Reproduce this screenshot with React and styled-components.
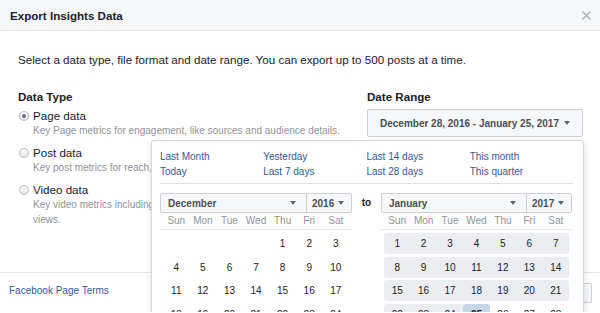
import React from "react";
import styled, { createGlobalStyle } from "styled-components";

const GlobalStyle = createGlobalStyle`
  html, body { margin: 0; padding: 0; overflow: hidden; background: #fff; }
  body { font-family: "Liberation Sans", Arial, Helvetica, sans-serif; color: #1d2129; }
  * { box-sizing: border-box; }
`;

const Dialog = styled.div`
  width: 600px;
  background: #fff;
`;

const Header = styled.div`
  height: 31px;
  background: #f6f7f9;
  border-bottom: 1px solid #e5e5e5;
  display: flex;
  align-items: center;
  justify-content: space-between;
  padding: 0 9px 0 10px;
`;

const Title = styled.div`
  font-size: 11.6px;
  font-weight: bold;
  color: #1d2129;
`;

const CloseButton = styled.button`
  border: 0;
  background: none;
  padding: 0;
  display: flex;
  cursor: pointer;
`;

const Body = styled.div`
  height: 241px;
  padding: 21px 17px 0 18px;
`;

const Intro = styled.p`
  margin: 0;
  font-size: 11.6px;
  line-height: 15px;
  color: #1d2129;
`;

const Columns = styled.div`
  display: grid;
  grid-template-columns: 1fr 216px;
  column-gap: 22px;
  margin-top: 22px;
`;

const SectionTitle = styled.div`
  font-size: 11.6px;
  font-weight: bold;
  line-height: 15px;
  color: #1d2129;
`;

const OptionList = styled.div`
  display: flex;
  flex-direction: column;
  gap: 7px;
  margin-top: 4px;
`;

const Option = styled.label`
  display: grid;
  grid-template-columns: 15px 1fr;
  align-items: center;
`;

const Radio = styled.span`
  width: 10px;
  height: 10px;
  margin-left: 1px;
  border-radius: 50%;
  border: 1px solid #b6bac0;
  background: linear-gradient(#ffffff, #e4e6ea);
  display: flex;
  align-items: center;
  justify-content: center;
  &::after {
    content: "";
    width: 4px;
    height: 4px;
    border-radius: 50%;
    background: ${(p) => (p.$checked ? "#6b6f76" : "transparent")};
  }
`;

const OptionLabel = styled.span`
  font-size: 11.6px;
  line-height: 15px;
  color: #1d2129;
`;

const OptionDesc = styled.span`
  grid-column: 2;
  font-size: 10px;
  line-height: 15px;
  color: #90949c;
`;

const DateCol = styled.div`
  display: flex;
  flex-direction: column;
`;

const DropWrap = styled.div`
  position: relative;
  margin-top: 5px;
`;

const DateButton = styled.button`
  width: 216px;
  height: 28px;
  background: #f6f7f9;
  border: 1px solid #ced0d4;
  border-radius: 2px;
  font-family: inherit;
  font-size: 10px;
  font-weight: bold;
  color: #4b4f56;
  display: flex;
  align-items: center;
  justify-content: center;
  gap: 5px;
  padding: 0 0 0 0;
`;

const Caret = styled.span`
  display: inline-block;
  width: 0;
  height: 0;
  border-left: 3.5px solid transparent;
  border-right: 3.5px solid transparent;
  border-top: 4px solid #606770;
  flex: none;
`;

const Popup = styled.div`
  position: absolute;
  z-index: 10;
  top: calc(100% + 3px);
  right: -1px;
  width: 433px;
  height: 220px;
  background: #fff;
  border: 1px solid rgba(0, 0, 0, 0.15);
  border-radius: 3px;
  box-shadow: 0 2px 6px rgba(0, 0, 0, 0.15);
  padding: 8px 10px 0 8px;
`;

const QuickLinks = styled.div`
  display: grid;
  grid-template-columns: repeat(4, 1fr);
  padding-bottom: 4px;
  border-bottom: 1px solid #dddfe2;
`;

const QuickLink = styled.a`
  font-size: 10px;
  line-height: 15px;
  color: #365899;
  text-decoration: none;
`;

const CalendarRow = styled.div`
  display: flex;
  margin-top: 9px;
`;

const ToLabel = styled.div`
  width: 29px;
  height: 20px;
  line-height: 20px;
  text-align: center;
  font-size: 10px;
  font-weight: bold;
  color: #1d2129;
`;

const Calendar = styled.div`
  width: ${(p) => p.$width}px;
`;

const SelectBar = styled.div`
  display: flex;
  height: 20px;
  background: #f6f7f9;
  border: 1px solid #ced0d4;
  border-radius: 2px;
  font-size: 10px;
  font-weight: bold;
  color: #4b4f56;
`;

const MonthSelect = styled.div`
  flex: 1;
  display: flex;
  align-items: center;
  justify-content: space-between;
  padding: 0 10px 0 7px;
`;

const YearSelect = styled.div`
  width: 45px;
  display: flex;
  align-items: center;
  gap: 4px;
  padding-left: 5px;
  border-left: 1px solid #ced0d4;
`;

const WeekHeader = styled.div`
  display: flex;
  height: 17px;
  line-height: 16px;
  padding: 0 3px;
  border-bottom: 1px solid #e5e5e5;
`;

const WeekDay = styled.div`
  flex: 1;
  text-align: center;
  font-size: 10px;
  color: #90949c;
`;

const Weeks = styled.div`
  display: flex;
  flex-direction: column;
  gap: 2.5px;
  margin-top: 3px;
  padding: 0 3px;
`;

const Week = styled.div`
  display: flex;
  height: 21px;
`;

const Day = styled.div`
  flex: 1;
  text-align: center;
  line-height: 21px;
  font-size: 10px;
  color: #1d2129;
  font-weight: ${(p) => (p.$end ? "bold" : "normal")};
  background: ${(p) => (p.$end ? "#c9d5ea" : p.$inRange ? "#ebedf0" : "transparent")};
  border-radius: ${(p) =>
    p.$end ? "3px" : `${p.$first ? 3 : 0}px ${p.$last ? 3 : 0}px ${p.$last ? 3 : 0}px ${p.$first ? 3 : 0}px`};
`;

const Footer = styled.div`
  height: 40px;
  border-top: 1px solid #e5e5e5;
  display: flex;
  align-items: center;
  justify-content: space-between;
  padding: 0 8px 4px 9px;
`;

const TermsLink = styled.a`
  font-size: 10px;
  color: #365899;
  text-decoration: none;
`;

const Buttons = styled.div`
  display: flex;
  gap: 5px;
  margin-top: 5px;
`;

const FooterButton = styled.button`
  height: 20px;
  padding: 0 10px;
  font-family: inherit;
  font-size: 10px;
  font-weight: bold;
  color: #4b4f56;
  background: #f6f7f9;
  border: 1px solid #ced0d4;
  border-radius: 2px;
`;

const WEEKDAYS = ["Sun", "Mon", "Tue", "Wed", "Thu", "Fri", "Sat"];

function buildWeeks(startDay, days) {
  const cells = [];
  for (let i = 0; i < startDay; i++) cells.push(null);
  for (let d = 1; d <= days; d++) cells.push(d);
  while (cells.length % 7) cells.push(null);
  const weeks = [];
  for (let i = 0; i < cells.length; i += 7) weeks.push(cells.slice(i, i + 7));
  return weeks;
}

function MonthCalendar({ month, year, startDay, days, inRange, endDay, width }) {
  const weeks = buildWeeks(startDay, days);
  return (
    <Calendar $width={width}>
      <SelectBar>
        <MonthSelect>
          {month}
          <Caret />
        </MonthSelect>
        <YearSelect>
          {year}
          <Caret />
        </YearSelect>
      </SelectBar>
      <WeekHeader>
        {WEEKDAYS.map((w) => (
          <WeekDay key={w}>{w}</WeekDay>
        ))}
      </WeekHeader>
      <Weeks>
        {weeks.map((week, wi) => (
          <Week key={wi}>
            {week.map((d, di) => {
              const r = d != null && inRange(d);
              const prev = di > 0 && week[di - 1] != null && inRange(week[di - 1]);
              const next = di < 6 && week[di + 1] != null && inRange(week[di + 1]);
              return (
                <Day
                  key={di}
                  $inRange={r}
                  $end={d === endDay}
                  $first={r && !prev}
                  $last={r && !next}
                >
                  {d ?? ""}
                </Day>
              );
            })}
          </Week>
        ))}
      </Weeks>
    </Calendar>
  );
}

function CloseIcon() {
  return (
    <svg width="9" height="9" viewBox="0 0 9 9">
      <path d="M1 1 L8 8 M8 1 L1 8" stroke="#b4b7bd" strokeWidth="1.6" strokeLinecap="round" />
    </svg>
  );
}

const OPTIONS = [
  {
    label: "Page data",
    desc: "Key Page metrics for engagement, like sources and audience details.",
    checked: true,
  },
  { label: "Post data", desc: "Key post metrics for reach, engagement, and clicks." },
  {
    label: "Video data",
    desc: (
      <>
        Key video metrics including views, unique views, and 10-second
        <br />
        views.
      </>
    ),
  },
];

const QUICK = ["Last Month", "Yesterday", "Last 14 days", "This month", "Today", "Last 7 days", "Last 28 days", "This quarter"];

export default function App() {
  return (
    <>
      <GlobalStyle />
      <Dialog>
        <Header>
          <Title>Export Insights Data</Title>
          <CloseButton aria-label="Close">
            <CloseIcon />
          </CloseButton>
        </Header>
        <Body>
          <Intro>Select a data type, file format and date range. You can export up to 500 posts at a time.</Intro>
          <Columns>
            <div>
              <SectionTitle>Data Type</SectionTitle>
              <OptionList>
                {OPTIONS.map((o) => (
                  <Option key={o.label}>
                    <Radio $checked={o.checked} />
                    <OptionLabel>{o.label}</OptionLabel>
                    <OptionDesc>{o.desc}</OptionDesc>
                  </Option>
                ))}
              </OptionList>
            </div>
            <DateCol>
              <SectionTitle>Date Range</SectionTitle>
              <DropWrap>
                <DateButton>
                  December 28, 2016 - January 25, 2017
                  <Caret />
                </DateButton>
                <Popup>
                  <QuickLinks>
                    {QUICK.map((q) => (
                      <QuickLink key={q} href="#">
                        {q}
                      </QuickLink>
                    ))}
                  </QuickLinks>
                  <CalendarRow>
                    <MonthCalendar
                      month="December"
                      year="2016"
                      startDay={4}
                      days={31}
                      width={192}
                      inRange={(d) => d >= 28}
                    />
                    <ToLabel>to</ToLabel>
                    <MonthCalendar
                      month="January"
                      year="2017"
                      startDay={0}
                      days={31}
                      width={191}
                      inRange={(d) => d <= 25}
                      endDay={25}
                    />
                  </CalendarRow>
                </Popup>
              </DropWrap>
            </DateCol>
          </Columns>
        </Body>
        <Footer>
          <TermsLink href="#">Facebook Page Terms</TermsLink>
          <Buttons>
            <FooterButton>Cancel</FooterButton>
            <FooterButton>Export Data</FooterButton>
          </Buttons>
        </Footer>
      </Dialog>
    </>
  );
}
